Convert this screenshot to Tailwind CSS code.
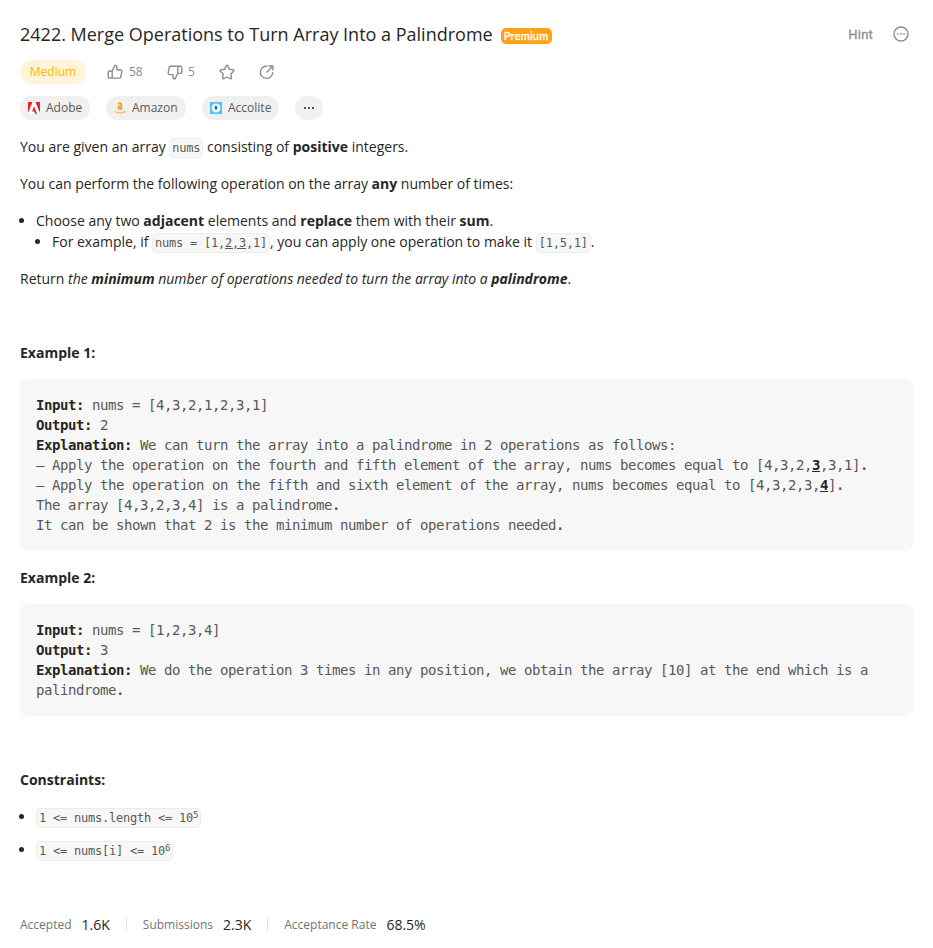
<!DOCTYPE html>
<html lang="en">
<head>
<meta charset="utf-8">
<title>2422. Merge Operations to Turn Array Into a Palindrome</title>
<script src="https://cdn.jsdelivr.net/npm/@tailwindcss/browser@4"></script>
</head>
<body class="bg-white text-[#262626] font-['Open_Sans',sans-serif] text-[14px] leading-[21px]">
<main class="px-5 pt-[22px] h-[948px] overflow-hidden">
  <header class="flex h-6 items-center">
    <h1 class="text-[18px] leading-6 whitespace-nowrap">2422. Merge Operations to Turn Array Into a Palindrome</h1>
    <span class="ml-[8px] mt-[4px] flex h-4 w-[51px] items-center justify-center rounded-[5px] bg-[#ffa116] font-['Lato'] text-[11px] leading-4 tracking-[0.2px] font-medium text-white [-webkit-text-stroke:0.3px_white]">Premium</span>
    <span class="ml-auto font-['Roboto'] text-[13px] tracking-[0.2px] text-[#8c8c8c] [-webkit-text-stroke:0.3px_#8c8c8c]">Hint</span>
    <svg class="ml-5 mr-1 size-4" viewBox="0 0 16 16" fill="none" stroke="#8c8c8c" stroke-width="1.4"><circle cx="8" cy="8" r="7"/><path d="M4.2 8h1.5M7.25 8h1.5M10.3 8h1.5" stroke-width="1.5"/></svg>
  </header>

  <div class="mt-[14px] flex h-6 items-center text-[12px] text-[#8c8c8c]">
    <span class="flex h-6 w-[66px] items-center justify-center rounded-full bg-[#fff4d9] pb-px text-[#ffb800]">Medium</span>
    <svg class="ml-[21px] size-4" viewBox="0 0 16 16" fill="none" stroke="#8c8c8c" stroke-width="1.4" stroke-linejoin="round"><path d="M5.2 7 8 1.4c1.100 0 1.900.7 1.900 1.800v2.600h3.500c1 0 1.600.8 1.400 1.700l-.9 5.200c-.1.9-.7 1.400-1.500 1.400H2.700c-.9 0-1.500-.6-1.500-1.500V8.500c0-.9.6-1.500 1.400-1.500h2.600v7"/></svg>
    <span class="ml-[6px] w-[17px] pb-px">58</span>
    <svg class="ml-[21px] size-4" viewBox="0 0 16 16" fill="none" stroke="#8c8c8c" stroke-width="1.4" stroke-linejoin="round"><path d="M10.800 9.400 8 15c-1.100 0-1.900-.7-1.900-1.800v-2.600H2.600c-1 0-1.600-.8-1.400-1.700l.9-5.200c.1-.9.7-1.400 1.500-1.400h9.700c.9 0 1.500.6 1.500 1.500v4.100c0 .9-.6 1.500-1.400 1.500h-2.600v-7"/></svg>
    <span class="ml-[5px] w-[8px] pb-px">5</span>
    <svg class="ml-[23px] size-4" viewBox="0 0 16 16" fill="none" stroke="#8c8c8c" stroke-width="1.4" stroke-linejoin="round"><path d="M7.300 1.600q.7-.9 1.400 0l1.500 3.600 4 .6q1.200.5.4 1.500l-2.700 2.800.5 3.800q-.1 1.200-1.200.8L8 13l-3.200 1.700q-1.100.4-1.200-.8l.5-3.800L1.400 7.300q-.8-1 .4-1.500l4-.6Z"/></svg>
    <svg class="ml-6 size-4" viewBox="0 0 16 16" fill="none" stroke="#8c8c8c" stroke-width="1.4" stroke-linecap="round" stroke-linejoin="round"><path d="M8 2H7.500a6.200 6.200 0 1 0 6.200 6.800M8 8l5.500-5.500M10 2h3.900v3.900"/></svg>
  </div>

  <div class="mt-3 flex h-6 items-center gap-4 text-[12px] text-[#595959]">
    <span class="flex h-6 w-[70px] items-center rounded-full bg-[#f0f0f0] pl-2">
      <svg class="mr-[6px] size-3" viewBox="0 0 12 12"><path fill="#fff" d="M0 0h12v12H0z"/><path fill="#ed2224" d="M0 0h4.500L0 11ZM7.500 0H12v11ZM6 4l3 8H7.200l-.9-2.500H4.200Z"/></svg><span class="pb-px">Adobe</span></span>
    <span class="flex h-6 w-[80px] items-center rounded-full bg-[#f0f0f0] pl-2">
      <svg class="mr-[6px] size-3" viewBox="0 0 12 12" fill="none" stroke="#f9a11b"><path d="M4.200 2.400C4.500.8 7.300.6 7.300 2.500v4.100l.8 1M7.200 4C5.500 4 4.200 4.300 4.200 5.700s2.400 1.700 3-.3" stroke-width="1.700"/><path d="M.5 9.500c3.400 2 7.300 2 10.300.4" stroke-width=".9"/><path d="M9.500 9.300l1.700-.1-.4 1.500" stroke-width=".6"/></svg><span class="pb-px">Amazon</span></span>
    <span class="flex h-6 w-[77px] items-center rounded-full bg-[#f0f0f0] pl-2">
      <svg class="mr-[6px] size-3" viewBox="0 0 12 12"><path fill="#4fc3f7" d="M0 0h12v12H0z"/><circle cx="6" cy="6" r="4.500" fill="#eef8fd"/><path fill="#155d86" d="M6 3.300c.7 1.200 1.300 2 1.300 3a1.300 1.300 0 0 1-2.600 0C4.700 5.300 5.300 4.500 6 3.300Z"/></svg><span class="pb-px">Accolite</span></span>
    <span class="flex h-6 w-7 items-center justify-center rounded-full bg-[#f0f1f3]"><svg class="h-[2px] w-[10px]" viewBox="0 0 10 2" fill="#595959"><path d="M0 0h2v2H0zM4 0h2v2H4zM8 0h2v2H8z"/></svg></span>
  </div>

  <article class="mt-4">
    <p class="mb-4">You are given an array <code class="rounded-[5px] border border-[#ececec] bg-[#f7f7f8] px-[2px] py-[2px] font-['DejaVu_Sans_Mono',monospace] text-[12px] leading-none tracking-[-0.224px] text-[#595959]">nums</code> consisting of <strong>positive</strong> integers.</p>
    <p class="mb-4">You can perform the following operation on the array <strong>any</strong> number of times:</p>
    <ul class="mb-4 list-disc pl-4">
      <li>Choose any two <strong>adjacent</strong> elements and <strong>replace</strong> them with their <strong>sum</strong>.
        <ul class="list-disc pl-4">
          <li>For example, if <code class="rounded-[5px] border border-[#ececec] bg-[#f7f7f8] px-[2px] py-[2px] font-['DejaVu_Sans_Mono',monospace] text-[12px] leading-none tracking-[-0.224px] text-[#595959]">nums = [1,<u>2,3</u>,1]</code>, you can apply one operation to make it <code class="rounded-[5px] border border-[#ececec] bg-[#f7f7f8] px-[2px] py-[2px] font-['DejaVu_Sans_Mono',monospace] text-[12px] leading-none tracking-[-0.224px] text-[#595959]">[1,5,1]</code>.</li>
        </ul>
      </li>
    </ul>
    <p class="mb-4">Return <em>the <strong>minimum</strong> number of operations needed to turn the array into a <strong>palindrome</strong></em>.</p>
    <p class="mb-4">&nbsp;</p>
    <p class="mb-4"><strong>Example 1:</strong></p>
    <pre class="mb-4 whitespace-pre-wrap rounded-lg bg-[#f7f7f7] p-4 font-['DejaVu_Sans_Mono',monospace] text-[14px] leading-5 tracking-[-0.428px] text-[#595959]"><strong class="text-[#262626]">Input:</strong> nums = [4,3,2,1,2,3,1]
<strong class="text-[#262626]">Output:</strong> 2
<strong class="text-[#262626]">Explanation:</strong> We can turn the array into a palindrome in 2 operations as follows:
– Apply the operation on the fourth and fifth element of the array, nums becomes equal to [4,3,2,<u class="font-bold text-[#262626]">3</u>,3,1]<b>.</b>
– Apply the operation on the fifth and sixth element of the array, nums becomes equal to [4,3,2,3,<u class="font-bold text-[#262626]">4</u>]<b>.</b>
The array [4,3,2,3,4] is a palindrome<b>.</b>
It can be shown that 2 is the minimum number of operations needed<b>.</b></pre>
    <p class="mb-4"><strong>Example 2:</strong></p>
    <pre class="mb-4 whitespace-pre-wrap rounded-lg bg-[#f7f7f7] p-4 font-['DejaVu_Sans_Mono',monospace] text-[14px] leading-5 tracking-[-0.428px] text-[#595959]"><strong class="text-[#262626]">Input:</strong> nums = [1,2,3,4]
<strong class="text-[#262626]">Output:</strong> 3
<strong class="text-[#262626]">Explanation:</strong> We do the operation 3 times in any position, we obtain the array [10] at the end which is a palindrome<b>.</b></pre>
    <p class="mb-4">&nbsp;</p>
    <p class="mb-4"><strong>Constraints:</strong></p>
    <ul class="list-disc pl-4">
      <li class="mb-3"><code class="rounded-[5px] border border-[#ececec] bg-[#f7f7f8] px-[2px] py-[2px] font-['DejaVu_Sans_Mono',monospace] text-[12px] leading-none tracking-[-0.224px] text-[#595959]">1 &lt;= nums.length &lt;= 10<sup class="text-[9px]">5</sup></code></li>
      <li class="mb-3"><code class="rounded-[5px] border border-[#ececec] bg-[#f7f7f8] px-[2px] py-[2px] font-['DejaVu_Sans_Mono',monospace] text-[12px] leading-none tracking-[-0.224px] text-[#595959]">1 &lt;= nums[i] &lt;= 10<sup class="text-[9px]">6</sup></code></li>
    </ul>
  </article>

  <footer class="mt-[54px] flex h-[21px] items-center text-[14px]">
    <span class="text-[12px] text-[#737373]">Accepted</span><span class="ml-[10px]">1.6K</span>
    <span class="mx-4 h-[14px] w-px bg-[#e5e5e5]"></span>
    <span class="text-[12px] text-[#737373]">Submissions</span><span class="ml-[10px]">2.3K</span>
    <span class="mx-4 h-[14px] w-px bg-[#e5e5e5]"></span>
    <span class="text-[12px] text-[#737373]">Acceptance Rate</span><span class="ml-[10px]">68.5%</span>
  </footer>
</main>
</body>
</html>
